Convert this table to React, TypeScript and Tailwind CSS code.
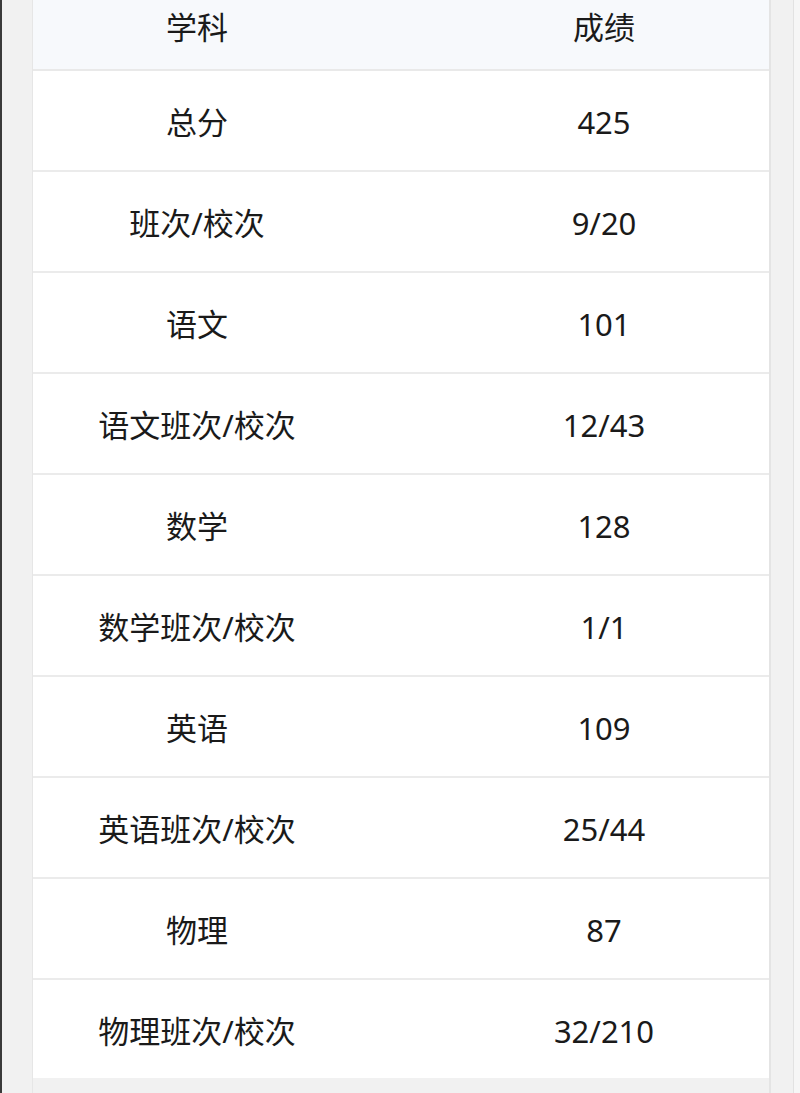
import React from "react";

const rows: [string, string][] = [
  ["总分", "425"],
  ["班次/校次", "9/20"],
  ["语文", "101"],
  ["语文班次/校次", "12/43"],
  ["数学", "128"],
  ["数学班次/校次", "1/1"],
  ["英语", "109"],
  ["英语班次/校次", "25/44"],
  ["物理", "87"],
  ["物理班次/校次", "32/210"],
];

export default function App() {
  return (
    <div
      className="flex h-[1093px] w-[800px] overflow-hidden bg-[#f1f1f1] text-[31px] text-[#1a1a1a]"
      style={{ fontFamily: '"Noto Sans", "Noto Sans CJK SC", sans-serif' }}
    >
      <div className="w-[2px] bg-[#3a3a3a]" />
      <div className="w-[31px] border-r border-[#e6e6e6]" />
      <div className="flex w-[736px] flex-col">
        <div className="grid h-[71px] grid-cols-[328px_1fr] items-center border-b-2 border-[#e9e9e9] bg-[#f7f9fc] leading-none">
          <div className="text-center -mt-[14px]">学科</div>
          <div className="pl-[78px] text-center -mt-[14px]">成绩</div>
        </div>
        {rows.map(([a, b], i) => (
          <div
            key={i}
            className={`grid grid-cols-[328px_1fr] items-center bg-white pt-[4px] leading-none ${
              i === rows.length - 1 ? "h-[98px]" : "h-[101px] border-b-2 border-[#ebebeb]"
            }`}
          >
            <div className="text-center">{a}</div>
            <div className="pl-[78px] text-center">{b}</div>
          </div>
        ))}
      </div>
      <div className="w-[24px] border-l-2 border-[#e4e4e4]" />
      <div className="flex-1 border-l border-[#e2e2e2] bg-[#f6f6f6]" />
    </div>
  );
}
